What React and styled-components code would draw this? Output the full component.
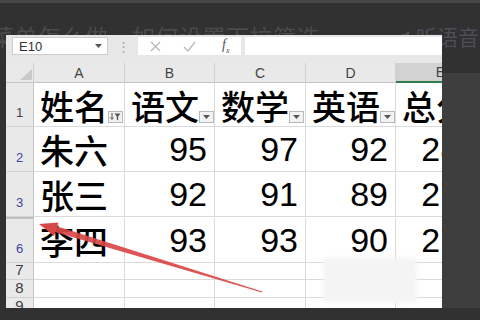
import React from "react";
import styled, { createGlobalStyle } from "styled-components";

const GlobalStyle = createGlobalStyle`
  html, body { margin: 0; padding: 0; background: #313131; }
  body { font-family: "Liberation Sans", Arial, sans-serif; }
`;

const Page = styled.div`
  position: relative;
  width: 480px;
  height: 320px;
  overflow: hidden;
  background: #313131;
  display: flex;
  flex-direction: column;
`;

const TopStripe = styled.div`
  height: 3px;
  background: #474747;
`;

const TitleBar = styled.div`
  display: flex;
  align-items: center;
  height: 24px;
  margin-top: 21px;
  margin-left: -9px;
  white-space: nowrap;
  color: #4b4b4b;
  font-family: "Noto Sans CJK SC", sans-serif;
  font-size: 23px;
  line-height: 24px;
  filter: blur(0.7px);
`;

const TitleText = styled.span`
  width: 410px;
  flex-shrink: 0;
  letter-spacing: 0.5px;
`;

const Listen = styled.span`
  display: flex;
  align-items: center;
  gap: 3px;
  flex-shrink: 0;
  color: #4d4f58;
  font-size: 21px;
`;

const MainRow = styled.div`
  position: relative;
  z-index: 1;
  display: flex;
  height: 273px;
  margin-top: -13px;
`;

const Gutter = styled.div`
  width: 6px;
  flex-shrink: 0;
`;

const Panel = styled.div`
  width: 436px;
  flex-shrink: 0;
  background: #e7e7e7;
  overflow: hidden;
  display: flex;
  flex-direction: column;
`;

const RightSide = styled.div`
  flex: 1;
  display: flex;
  flex-direction: column;
`;

const RightShade = styled.div`
  margin-top: 38px;
  flex: 1;
  background: #3e3e3e;
`;

const FormulaBar = styled.div`
  display: flex;
  align-items: center;
  height: 18px;
  padding: 2px 0 0 6px;
`;

const NameBox = styled.div`
  box-sizing: border-box;
  width: 96px;
  height: 18px;
  background: #fff;
  border: 1px solid #cdcdcd;
  display: flex;
  align-items: center;
  justify-content: space-between;
  padding: 0 5px 0 6px;
  font-size: 13px;
  color: #333;
`;

const Dots = styled.div`
  width: 30px;
  text-align: center;
  color: #a9a9a9;
  font-size: 13px;
`;

const FxBox = styled.div`
  box-sizing: border-box;
  width: 103px;
  height: 18px;
  background: #fff;
  display: flex;
  align-items: center;
  padding-left: 12px;
  gap: 22px;
`;

const Fx = styled.span`
  font-family: "Liberation Serif", serif;
  font-style: italic;
  font-size: 14px;
  color: #555;
  margin-left: 4px;
  sub { font-size: 8px; }
`;

const FormulaInput = styled.div`
  flex: 1;
  height: 18px;
  margin-left: 4px;
  background: #fff;
`;

const Grid = styled.div`
  margin-top: 8px;
  display: grid;
  grid-template-columns: 28px 91px 90px 91px 90px 90px;
  grid-auto-rows: auto;
`;

const Corner = styled.div`
  box-sizing: border-box;
  height: 20px;
  background: #e9e9e9;
  border-right: 1px solid #cfcfcf;
  border-bottom: 1px solid #c4c4c4;
  position: relative;
`;

const ColHead = styled.div`
  box-sizing: border-box;
  height: 20px;
  display: flex;
  align-items: center;
  justify-content: center;
  font-size: 14px;
  color: #444;
  background: ${(p) => (p.$active ? "#d2d2d2" : "#e9e9e9")};
  border-right: 1px solid #d0d0d0;
  border-bottom: ${(p) => (p.$active ? "2px solid #2f7d4f" : "1px solid #c4c4c4")};
`;

const RowHead = styled.div`
  box-sizing: border-box;
  height: ${(p) => p.$h}px;
  display: flex;
  align-items: flex-end;
  justify-content: center;
  padding-bottom: ${(p) => (p.$h > 30 ? 6 : 1)}px;
  font-size: ${(p) => (p.$h > 30 ? 13 : 15)}px;
  color: ${(p) => (p.$filtered ? "#3a46a0" : "#3d3d3d")};
  background: #e9e9e9;
  border-right: 1px solid #c6c6c6;
  border-bottom: 1px solid #d2d2d2;
  border-top: ${(p) => (p.$hiddenAbove ? "2px solid #c0c0c0" : "0")};
`;

const Cell = styled.div`
  box-sizing: border-box;
  height: ${(p) => p.$h}px;
  display: flex;
  align-items: flex-end;
  justify-content: ${(p) => (p.$num ? "flex-end" : "space-between")};
  padding: 0 ${(p) => (p.$num ? 7 : 2)}px 3px ${(p) => (p.$num ? 0 : 6)}px;
  background: #fff;
  border-right: 1px solid #dadada;
  border-bottom: 1px solid #dadada;
  border-top: ${(p) => (p.$hiddenAbove ? "2px solid #fff" : "0")};
  overflow: hidden;
  white-space: nowrap;
`;

const CjkText = styled.span`
  font-family: "Noto Sans CJK SC", sans-serif;
  font-weight: 500;
  font-size: 34px;
  line-height: 1;
  color: #000;
  margin-bottom: ${(p) => (p.$header ? 0 : 1)}px;
`;

const NumText = styled.span`
  font-family: "Liberation Sans", Arial, sans-serif;
  font-size: 34px;
  line-height: 34px;
  color: #000;
  margin-bottom: 2px;
`;

const FilterBtn = styled.span`
  box-sizing: border-box;
  width: 15px;
  height: 12px;
  flex-shrink: 0;
  display: flex;
  align-items: center;
  justify-content: center;
  background: #f2f2f2;
  border: 1px solid #b9b9b9;
`;

const Cover = styled.div`
  position: absolute;
  left: 323px;
  top: 258px;
  width: 94px;
  height: 45px;
  background: #f4f4f4;
  filter: blur(2px);
  z-index: 2;
`;

const ArrowLayer = styled.svg`
  position: absolute;
  left: 0;
  top: 0;
  z-index: 3;
  pointer-events: none;
`;

const columns = ["A", "B", "C", "D", "E"];
const headers = ["姓名", "语文", "数学", "英语", "总分"];
const rows = [
  { n: 2, h: 45, name: "朱六", v: [95, 97, 92, 284], filtered: true },
  { n: 3, h: 45, name: "张三", v: [92, 91, 89, 272], filtered: true },
  { n: 6, h: 46, name: "李四", v: [93, 93, 90, 276], filtered: true, hiddenAbove: true },
];
const emptyRows = [
  { n: 7, h: 17 },
  { n: 8, h: 18 },
  { n: 9, h: 18 },
];

const Caret = () => (
  <svg width="7" height="4" viewBox="0 0 7 4">
    <path d="M0 0h7L3.5 4z" fill="#555" />
  </svg>
);

const SortFilterIcon = () => (
  <svg width="11" height="8" viewBox="0 0 11 8">
    <path d="M2 0v6M0.5 4.5L2 6.5 3.5 4.5" stroke="#555" strokeWidth="1" fill="none" />
    <path d="M4.5 0.5h6L8.2 3.5v4l-1.4-1v-3z" fill="#555" />
  </svg>
);

export default function App() {
  return (
    <>
      <GlobalStyle />
      <Page>
        <TopStripe />
        <TitleBar>
          <TitleText>菜单怎么做，如何设置下拉筛选</TitleText>
          <Listen>
            <svg width="12" height="14" viewBox="0 0 12 14">
              <path d="M1 5h3l4-3v10l-4-3H1z" fill="#4d4f58" />
            </svg>
            听语音
          </Listen>
        </TitleBar>
        <MainRow>
          <Gutter />
          <Panel>
            <FormulaBar>
              <NameBox>
                E10
                <Caret />
              </NameBox>
              <Dots>⋮</Dots>
              <FxBox>
                <svg width="11" height="11" viewBox="0 0 11 11">
                  <path d="M1 1l9 9M10 1l-9 9" stroke="#b8b8b8" strokeWidth="1.3" />
                </svg>
                <svg width="13" height="11" viewBox="0 0 13 11">
                  <path d="M1 6l4 4 7-9" stroke="#b8b8b8" strokeWidth="1.3" fill="none" />
                </svg>
                <Fx>
                  f<sub>x</sub>
                </Fx>
              </FxBox>
              <FormulaInput />
            </FormulaBar>
            <Grid>
              <Corner>
                <svg width="12" height="11" viewBox="0 0 12 11" style={{ position: "absolute", right: 1, bottom: 2 }}>
                  <path d="M12 0v11H0z" fill="#c9c9c9" />
                </svg>
              </Corner>
              {columns.map((c) => (
                <ColHead key={c} $active={c === "E"}>
                  {c}
                </ColHead>
              ))}

              <RowHead $h={44}>1</RowHead>
              {headers.map((t, i) => (
                <Cell key={t} $h={44}>
                  <CjkText $header>{t}</CjkText>
                  <FilterBtn>{i === 0 ? <SortFilterIcon /> : <Caret />}</FilterBtn>
                </Cell>
              ))}

              {rows.map((r) => (
                <React.Fragment key={r.n}>
                  <RowHead $h={r.h} $filtered={r.filtered} $hiddenAbove={r.hiddenAbove}>
                    {r.n}
                  </RowHead>
                  <Cell $h={r.h} $hiddenAbove={r.hiddenAbove}>
                    <CjkText>{r.name}</CjkText>
                  </Cell>
                  {r.v.map((v, i) => (
                    <Cell key={i} $h={r.h} $num $hiddenAbove={r.hiddenAbove}>
                      <NumText>{v}</NumText>
                    </Cell>
                  ))}
                </React.Fragment>
              ))}

              {emptyRows.map((r) => (
                <React.Fragment key={r.n}>
                  <RowHead $h={r.h}>{r.n}</RowHead>
                  {columns.map((c) => (
                    <Cell key={c} $h={r.h} />
                  ))}
                </React.Fragment>
              ))}
            </Grid>
          </Panel>
          <RightSide>
            <RightShade />
          </RightSide>
        </MainRow>
        <Cover />
        <ArrowLayer width="480" height="320" viewBox="0 0 480 320">
          <polygon points="262.3,291.4 261.9,292.6 53.2,231.6 55.4,225.8" fill="#d94848" opacity="0.92" />
          <polygon points="39,224 58.5,222.5 54,236" fill="#d94848" />
        </ArrowLayer>
      </Page>
    </>
  );
}
